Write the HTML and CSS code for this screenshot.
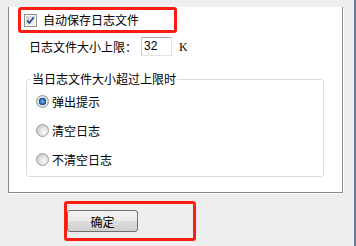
FILE: index.html
```html
<!DOCTYPE html>
<html lang="zh-CN">
<head>
    <meta charset="UTF-8">
    <title>日志设置</title>
    <link rel="stylesheet" href="styles.css">
</head>
<body>
    <div class="window">
        <div class="panel">
            <label class="autosave">
                <span class="check">
                    <svg width="13" height="13" viewBox="0 0 13 13">
                        <rect x="0.5" y="0.5" width="12" height="12" fill="#fff" stroke="#8e8f8f"/>
                        <rect x="2" y="2" width="9" height="9" fill="url(#box)"/>
                        <defs>
                            <linearGradient id="box" x1="0" y1="0" x2="1" y2="1">
                                <stop offset="0" stop-color="#c9cdd3"/>
                                <stop offset="1" stop-color="#f7f7f7"/>
                            </linearGradient>
                        </defs>
                        <path d="M3.2 6.4 L5.3 9 L9.8 3.2" fill="none" stroke="#2a4c94" stroke-width="1.7"/>
                    </svg>
                </span>
                自动保存日志文件
            </label>

            <div class="limit">
                <span>日志文件大小上限：</span>
                <span class="textbox">32</span>
                <span class="unit">K</span>
            </div>

            <fieldset class="group">
                <legend>当日志文件大小超过上限时</legend>
                <div class="option"><span class="radio on"></span>弹出提示</div>
                <div class="option"><span class="radio"></span>清空日志</div>
                <div class="option"><span class="radio"></span>不清空日志</div>
            </fieldset>
        </div>

        <div class="mark">
            <button class="ok">确定</button>
        </div>
    </div>
</body>
</html>
```

FILE: styles.css
```css
body {
    margin: 0;
    background: #eeeeee;
    font-family: "Noto Sans CJK SC", "Liberation Sans", sans-serif;
    font-size: 12px;
    line-height: 16px;
    color: #000;
}

.window {
    width: 354px;
    height: 246px;
    border-right: 2px solid #667d9a;
    overflow: hidden;
}

.panel {
    margin-left: 8px;
    width: 333px;
    background: #fff;
    border: 1px solid #8a8a8a;
    border-top: none;
    box-shadow: 1px 1px 0 #fff;
}

.autosave {
    display: flex;
    align-items: center;
    box-sizing: border-box;
    width: 159px;
    height: 26px;
    margin: 7px 0 0 9px;
    padding-left: 3px;
    border: 3px solid #fd1e12;
    border-radius: 3px;
}

.check {
    display: flex;
    width: 13px;
    height: 13px;
    margin-right: 6px;
}

.limit {
    display: flex;
    align-items: center;
    height: 19px;
    margin: 4px 0 0 20px;
}

.textbox {
    box-sizing: border-box;
    width: 31px;
    height: 19px;
    margin-left: 4px;
    padding-left: 2px;
    border: 1px solid #e2e3ea;
    border-top-color: #abadb3;
    border-left-color: #c9cbd2;
    font-family: "Liberation Sans", sans-serif;
    font-size: 12px;
    line-height: 17px;
}

.unit {
    margin-left: 7px;
    font-family: "Liberation Serif", serif;
    font-size: 12px;
}

.group {
    width: 298px;
    box-sizing: border-box;
    margin: 15px 0 15px 17px;
    padding: 0 0 2px 9px;
    border: 1px solid #d5dfe5;
    border-radius: 3px;
}

.group legend {
    margin-left: -5px;
    padding: 0 1px;
    line-height: 16px;
}

.option {
    display: flex;
    align-items: center;
    height: 29px;
}

.radio {
    box-sizing: border-box;
    width: 13px;
    height: 13px;
    margin-right: 3px;
    border: 1px solid #9a9b9b;
    border-radius: 50%;
    background: radial-gradient(circle at 65% 65%, #fbfbfb 0, #e4e4e4 4px, #cfcfcf 7px);
}

.radio.on {
    background: radial-gradient(circle at 50% 50%, #7cc4f8 0, #2f7bc0 2px, #1a4e86 3.5px, #e6e6e6 4px, #d2d2d2 6px);
}

.mark {
    box-sizing: border-box;
    width: 132px;
    height: 40px;
    margin: 8px 0 0 64px;
    padding-top: 6px;
    border: 3px solid #fd1e12;
    border-radius: 3px;
}

.ok {
    display: block;
    width: 71px;
    height: 22px;
    padding: 0;
    border: 1px solid #707070;
    border-radius: 3px;
    background: linear-gradient(#f2f2f2, #ebebeb 50%, #dddddd 50%, #cfcfcf);
    font-family: "Noto Sans CJK SC", sans-serif;
    font-size: 12px;
    color: #000;
}
```
